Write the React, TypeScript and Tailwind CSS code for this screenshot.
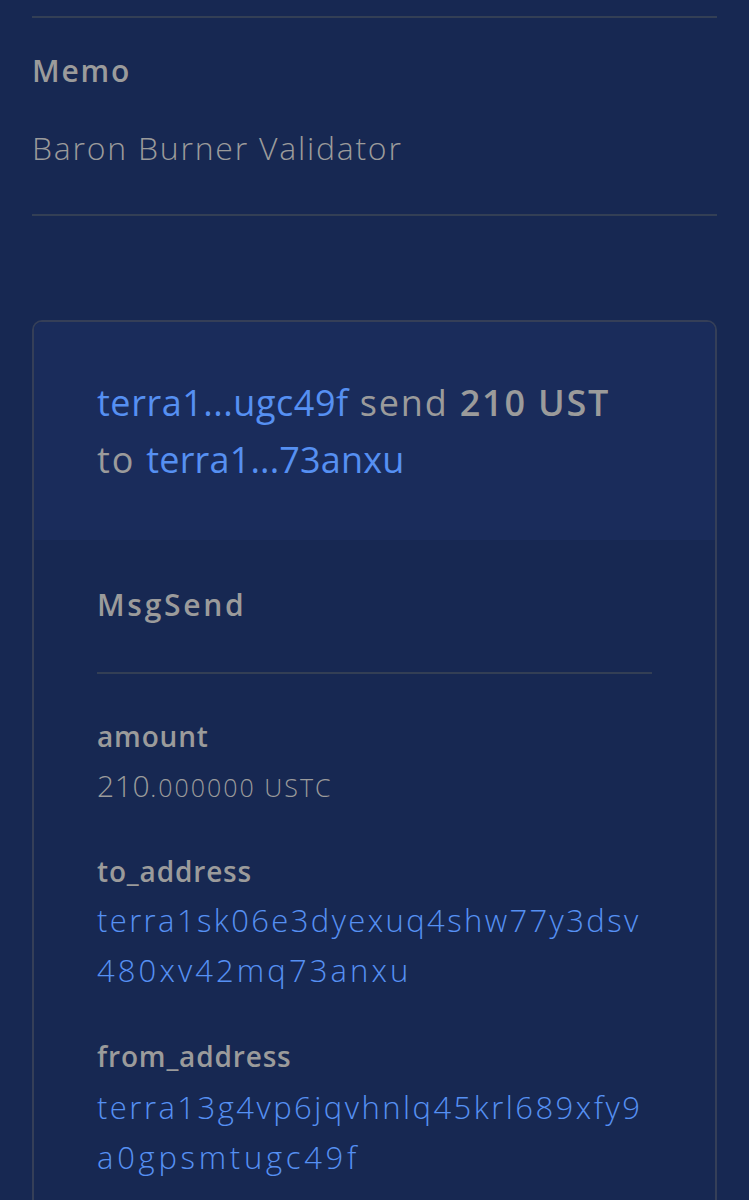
import React from "react";

const font = { fontFamily: '"Open Sans", "Noto Sans", sans-serif' };

export default function App() {
  return (
    <div className="min-h-[1200px] w-full bg-[#172852] px-[32px] pt-[16px]" style={font}>
      <div className="border-t-2 border-[#333f55]" />
      <div className="pt-[34px] pb-[46px]">
        <div className="text-[30px] font-semibold leading-[38px] tracking-[0.06em] text-[#9b9b9b]">Memo</div>
        <div className="mt-[38px] text-[32px] font-light leading-[40px] tracking-[0.055em] text-[#9b9b9b]">
          Baron Burner Validator
        </div>
      </div>
      <div className="border-t-2 border-[#333f55]" />
      <div className="mt-[104px] overflow-hidden rounded-[10px] border-2 border-[#353f58]">
        <div className="bg-[#1a2c5b] px-[63px] pt-[52px] pb-[52px] text-[36px] leading-[57px] tracking-[0.05em] text-[#9b9b9b]">
          <span className="tracking-[0.015em] text-[#5690f2]">terra1...ugc49f</span> send{" "}
          <span className="font-semibold">210 UST</span>
          <br />
          to <span className="tracking-[0.005em] text-[#5690f2]">terra1...73anxu</span>
        </div>
        <div className="bg-[#172852] px-[63px] pt-[45px]">
          <div className="text-[30px] font-semibold leading-[40px] tracking-[0.09em] text-[#9b9b9b]">MsgSend</div>
          <div className="mt-[47px] border-t-2 border-[#333f55]" />
          <div className="pt-[44px] pb-[40px]">
            <div className="text-[28px] font-semibold leading-[36px] tracking-[0.03em] text-[#9b9b9b]">amount</div>
            <div className="mt-[12px] leading-[40px] text-[#9b9b9b]">
              <span className="text-[30px] font-light tracking-[0.02em]">210</span>
              <span className="text-[25px] font-light tracking-[0.08em]">.000000 USTC</span>
            </div>
            <div className="mt-[42px] text-[28px] font-semibold leading-[36px] tracking-[0.03em] text-[#9b9b9b]">
              to_address
            </div>
            <div className="mt-[6px] text-[31px] font-light leading-[50px] tracking-[0.077em] text-[#5690f2]">
              terra1sk06e3dyexuq4shw77y3dsv
              <br />
              <span className="tracking-[0.1em]">480xv42mq73anxu</span>
            </div>
            <div className="mt-[43px] text-[28px] font-semibold leading-[36px] tracking-[0.03em] text-[#9b9b9b]">
              from_address
            </div>
            <div className="mt-[8px] text-[31px] font-light leading-[50px] tracking-[0.08em] text-[#5690f2]">
              terra13g4vp6jqvhnlq45krl689xfy9
              <br />
              <span className="tracking-[0.12em]">a0gpsmtugc49f</span>
            </div>
          </div>
        </div>
      </div>
    </div>
  );
}
